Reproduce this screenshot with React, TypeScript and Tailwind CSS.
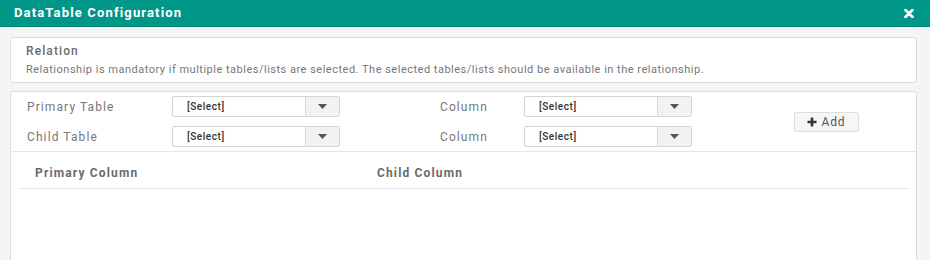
import React from "react";

function Caret() {
  return (
    <svg width="9" height="5" viewBox="0 0 9 5" className="block">
      <path d="M0 0 L9 0 L4.5 5 Z" fill="#555" />
    </svg>
  );
}

function SelectBox() {
  return (
    <div className="flex h-[21px] w-[168px] rounded-[2px] border border-[#d4d4d4] bg-white overflow-hidden">
      <div className="flex flex-1 items-center pl-[14px] text-[10px] font-medium text-[#333] tracking-[0.55px]">
        [Select]
      </div>
      <div className="flex w-[34px] items-center justify-center border-l border-[#d9d9d9] bg-[#f2f2f2]">
        <Caret />
      </div>
    </div>
  );
}

const label = "text-[12px] tracking-[1.1px] text-[#777]";

export default function App() {
  return (
    <div
      className="w-[930px] h-[260px] overflow-hidden bg-[#f5f5f5]"
      style={{ fontFamily: "Roboto, 'Liberation Sans', sans-serif" }}
    >
      <div className="flex h-[27px] items-center justify-between bg-[#009688] pl-[14px] pr-[16px] border-b border-[#00806f]">
        <div className="text-[13px] font-bold tracking-[1.15px] text-white">DataTable Configuration</div>
        <svg width="10" height="9" viewBox="0 0 10 9">
          <path d="M1.5 1 L8.5 8 M8.5 1 L1.5 8" stroke="white" strokeWidth="2.6" strokeLinecap="round" />
        </svg>
      </div>
      <div className="flex flex-col gap-[8px] pl-[10px] pr-[13px] pt-[10px]">
        <div className="h-[46px] rounded-[3px] border border-[#dcdcdc] bg-white pl-[15px] pt-[5px]">
          <div className="text-[12px] font-medium tracking-[1.1px] text-[#6b6b6b] leading-[17px]">Relation</div>
          <div className="mt-[3px] text-[11px] tracking-[0.5px] text-[#777] leading-[14px] whitespace-nowrap">
            Relationship is mandatory if multiple tables/lists are selected. The selected tables/lists should be available in the relationship.
          </div>
        </div>
        <div className="h-[200px] rounded-[3px] border border-[#dcdcdc] bg-white">
          <div className="flex h-[60px] items-center border-b border-[#e6e6e6]">
            <div className="flex flex-col gap-[9px] pl-[16px]">
              <div className="flex items-center">
                <div className={`w-[145px] pt-[1px] ${label}`}>Primary Table</div>
                <SelectBox />
                <div className={`w-[184px] pl-[100px] pt-[1px] ${label}`}>Column</div>
                <SelectBox />
              </div>
              <div className="flex items-center">
                <div className={`w-[145px] pt-[1px] ${label}`}>Child Table</div>
                <SelectBox />
                <div className={`w-[184px] pl-[100px] pt-[1px] ${label}`}>Column</div>
                <SelectBox />
              </div>
            </div>
            <div className="ml-[102px] flex h-[20px] w-[65px] items-center justify-center gap-[4px] rounded-[2px] border border-[#dedede] bg-[#f6f6f6] text-[12px] tracking-[0.9px] text-[#555]">
              <svg width="10" height="10" viewBox="0 0 10 10">
                <path d="M5 0.5 V9.5 M0.5 5 H9.5" stroke="#333" strokeWidth="2.6" />
              </svg>
              <span>Add</span>
            </div>
          </div>
          <div className="px-[7px]">
            <div className="flex h-[37px] items-center pt-[6px] border-b border-[#e8e8ee] text-[12px] font-bold tracking-[1.15px] text-[#6b6b6b]">
              <div className="w-[342px] pl-[17px]">Primary Column</div>
              <div className="pl-[17px]">Child Column</div>
            </div>
          </div>
        </div>
      </div>
    </div>
  );
}
